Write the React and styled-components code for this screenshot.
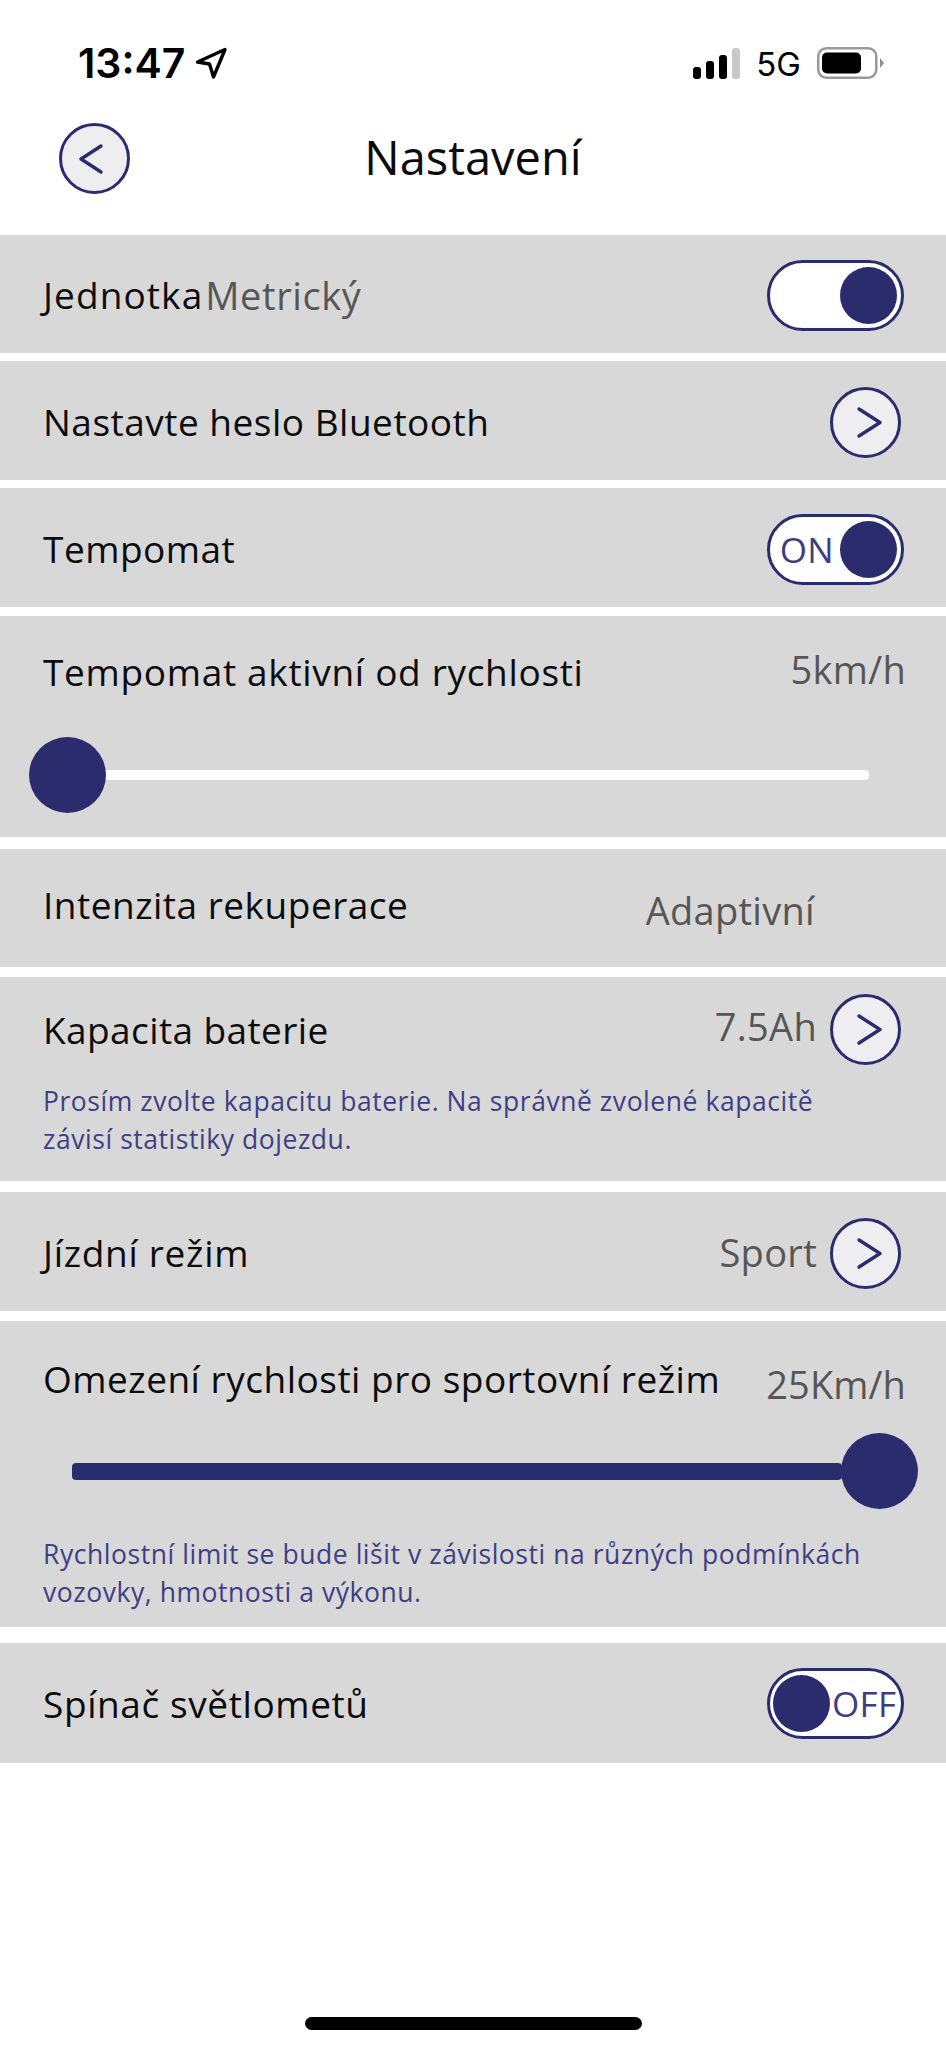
import React from "react";
import styled, { createGlobalStyle } from "styled-components";

const NAVY = "#2b2c6e";

const Global = createGlobalStyle`
  html, body { margin: 0; padding: 0; background: #fff; }
  * { box-sizing: border-box; }
`;

const Page = styled.div`
  width: 946px;
  height: 2048px;
  display: flex;
  flex-direction: column;
  background: #fff;
  overflow: hidden;
  font-family: "Open Sans", "Noto Sans", sans-serif;
`;

const StatusBar = styled.div`
  height: 123px;
  padding: 44px 62px 0 78px;
  display: flex;
  justify-content: space-between;
  align-items: flex-start;
  font-family: Inter, "Liberation Sans", sans-serif;
  color: #000;
`;
const StatusGroup = styled.div`
  display: flex;
  align-items: center;
  gap: ${(p) => p.$gap || 0}px;
  height: 38px;
`;
const Clock = styled.span`
  font-size: 41px;
  font-weight: 600;
  line-height: 38px;
`;
const Network = styled.span`
  font-size: 33px;
  font-weight: 400;
  line-height: 38px;
  transform: translateY(1px);
`;

const NavBar = styled.div`
  height: 112px;
  padding: 0 0 0 59px;
  display: flex;
  align-items: flex-start;
`;
const Title = styled.h1`
  margin: 0;
  flex: 1;
  padding: 3px 130px 0 0;
  text-align: center;
  font-size: 47px;
  line-height: 62px;
  font-weight: 400;
  color: #0b0b0b;
`;

const CircleButton = styled.div`
  width: 71px;
  height: 71px;
  flex: none;
  border-radius: 50%;
  border: 3px solid ${NAVY};
  background: #eeeef0;
  display: flex;
  align-items: center;
  justify-content: center;
`;

const Rows = styled.div`
  display: flex;
  flex-direction: column;
`;
const Row = styled.div`
  height: ${(p) => p.$h}px;
  margin-bottom: ${(p) => p.$gap || 0}px;
  background: #d8d8d8;
  padding: ${(p) => p.$pt || 0}px 42px 0 43px;
  display: flex;
  flex-direction: column;
`;
const Line = styled.div`
  display: flex;
  align-items: center;
  justify-content: space-between;
  height: ${(p) => p.$h || 71}px;
`;
const Label = styled.span`
  font-size: 37px;
  line-height: 50px;
  letter-spacing: ${(p) => p.$ls ?? 0.5}px;
  color: #0c0c0c;
  transform: translateY(${(p) => p.$dy || 0}px);
  white-space: nowrap;
`;
const Value = styled.span`
  font-size: 38px;
  line-height: 50px;
  letter-spacing: ${(p) => p.$ls ?? 0.3}px;
  color: #565656;
  white-space: nowrap;
  transform: translateY(${(p) => p.$dy || 0}px);
  margin-right: ${(p) => p.$mr || 0}px;
  margin-left: ${(p) => p.$ml || 0}px;
`;
const InlineLabel = styled.span`
  display: flex;
`;
const Trailing = styled.div`
  display: flex;
  align-items: center;
  gap: 13px;
  margin-right: 3px;
`;
const Note = styled.p`
  margin: ${(p) => p.$mt || 0}px 0 0;
  font-size: 26.5px;
  line-height: 38px;
  letter-spacing: 0.55px;
  color: #3f3f85;
  white-space: pre-line;
`;

const Toggle = styled.div`
  width: 137px;
  height: 71px;
  flex: none;
  border-radius: 36px;
  border: 3px solid ${NAVY};
  background: #fff;
  display: flex;
  align-items: center;
  justify-content: ${(p) => (p.$on ? "flex-end" : "flex-start")};
  padding: ${(p) => (p.$on ? "0 4px 0 6px" : "0 2px 0 3px")};
  gap: ${(p) => (p.$on ? 6 : 2)}px;
`;
const Knob = styled.div`
  width: 57px;
  height: 57px;
  border-radius: 50%;
  background: ${NAVY};
  flex: none;
`;
const ToggleText = styled.span`
  font-size: 35px;
  line-height: 40px;
  letter-spacing: 0.3px;
  color: #3d3d80;
`;

const SliderWrap = styled.div`
  position: relative;
  height: 76px;
  margin: ${(p) => p.$mt}px 0 0;
  display: flex;
  align-items: center;
`;
const Track = styled.div`
  width: ${(p) => p.$w}px;
  height: ${(p) => p.$th}px;
  margin-left: ${(p) => p.$ml}px;
  border-radius: 4px;
  background: ${(p) => p.$c};
`;
const Thumb = styled.div`
  position: absolute;
  top: 0;
  left: ${(p) => p.$x}px;
  width: 77px;
  height: 76px;
  border-radius: 50%;
  background: ${NAVY};
`;

const Footer = styled.div`
  margin-top: auto;
  padding-bottom: 18px;
  display: flex;
  justify-content: center;
`;
const HomeBar = styled.div`
  width: 337px;
  height: 13px;
  border-radius: 7px;
  background: #000;
`;

const Chevron = ({ dir }) => (
  <svg width="65" height="65" viewBox="0 0 65 65" fill="none">
    <path
      d={dir === "left" ? "M39 20 L19 33 L39 46" : "M26 19 L47 32.5 L26 46"}
      stroke={NAVY}
      strokeWidth="3.4"
      strokeLinecap="round"
      strokeLinejoin="round"
    />
  </svg>
);

const LocationArrow = () => (
  <svg width="34" height="34" viewBox="0 0 34 34" fill="none">
    <path
      d="M31 3.5 L3.5 16 L15.5 18 L19.5 31 Z"
      stroke="#000"
      strokeWidth="3.4"
      strokeLinejoin="round"
    />
  </svg>
);

const Signal = () => (
  <svg width="47" height="31" viewBox="0 0 47 31">
    <rect x="0" y="19" width="8" height="12" rx="3" fill="#000" />
    <rect x="13" y="13" width="8" height="18" rx="3" fill="#000" />
    <rect x="26" y="7" width="8" height="24" rx="3" fill="#000" />
    <rect x="39" y="0" width="8" height="31" rx="3" fill="#c9c9c9" />
  </svg>
);

const Battery = () => (
  <svg width="67" height="32" viewBox="0 0 67 32">
    <rect x="1.25" y="1.25" width="58" height="29.5" rx="8" fill="none" stroke="#999" strokeWidth="2.5" />
    <rect x="5" y="5.5" width="39" height="21" rx="5" fill="#000" />
    <path d="M63 11 L67 16 L63 21 Z" fill="#8e8e8e" />
  </svg>
);

export default function App() {
  return (
    <Page>
      <Global />
      <StatusBar>
        <StatusGroup $gap={9}>
          <Clock>13:47</Clock>
          <LocationArrow />
        </StatusGroup>
        <StatusGroup $gap={16}>
          <Signal />
          <Network>5G</Network>
          <Battery />
        </StatusGroup>
      </StatusBar>

      <NavBar>
        <CircleButton>
          <Chevron dir="left" />
        </CircleButton>
        <Title>Nastavení</Title>
      </NavBar>

      <Rows>
        <Row $h={118} $gap={8} $pt={25}>
          <Line>
            <InlineLabel>
              <Label $ls={1.1} $dy={-1}>Jednotka</Label>
              <Value $dy={-1} $ml={2} $ls={0.6}>Metrický</Value>
            </InlineLabel>
            <Toggle $on>
              <Knob />
            </Toggle>
          </Line>
        </Row>

        <Row $h={119} $gap={8} $pt={26}>
          <Line>
            <Label $dy={-1}>Nastavte heslo Bluetooth</Label>
            <Trailing>
              <CircleButton>
                <Chevron dir="right" />
              </CircleButton>
            </Trailing>
          </Line>
        </Row>

        <Row $h={119} $gap={9} $pt={26}>
          <Line>
            <Label $dy={-1}>Tempomat</Label>
            <Toggle $on>
              <ToggleText>ON</ToggleText>
              <Knob />
            </Toggle>
          </Line>
        </Row>

        <Row $h={221} $gap={12} $pt={22}>
          <Line>
            <Label $dy={-2} $ls={0.68}>Tempomat aktivní od rychlosti</Label>
            <Value $dy={-5} $mr={-2}>5km/h</Value>
          </Line>
          <SliderWrap $mt={28}>
            <Track $w={795} $th={10} $ml={31} $c="#fff" />
            <Thumb $x={-14} />
          </SliderWrap>
        </Row>

        <Row $h={118} $gap={10} $pt={21}>
          <Line>
            <Label $dy={-1}>Intenzita rekuperace</Label>
            <Value $dy={4} $mr={89}>Adaptivní</Value>
          </Line>
        </Row>

        <Row $h={204} $gap={11} $pt={17}>
          <Line>
            <Label $dy={0} $ls={0.4}>Kapacita baterie</Label>
            <Trailing>
              <Value $dy={-4}>7.5Ah</Value>
              <CircleButton>
                <Chevron dir="right" />
              </CircleButton>
            </Trailing>
          </Line>
          <Note $mt={17}>{"Prosím zvolte kapacitu baterie. Na správně zvolené kapacitě\nzávisí statistiky dojezdu."}</Note>
        </Row>

        <Row $h={119} $gap={10} $pt={26}>
          <Line>
            <Label $dy={-1} $ls={0.7}>Jízdní režim</Label>
            <Trailing>
              <Value $dy={-2}>Sport</Value>
              <CircleButton>
                <Chevron dir="right" />
              </CircleButton>
            </Trailing>
          </Line>
        </Row>

        <Row $h={306} $gap={16} $pt={0}>
          <Line $h={102}>
            <Label $dy={7}>Omezení rychlosti pro sportovní režim</Label>
            <Value $dy={12} $mr={-2} $ls={0.1}>25Km/h</Value>
          </Line>
          <SliderWrap $mt={10}>
            <Track $w={770} $th={17} $ml={29} $c={NAVY} />
            <Thumb $x={798} />
          </SliderWrap>
          <Note $mt={26}>{"Rychlostní limit se bude lišit v závislosti na různých podmínkách\nvozovky, hmotnosti a výkonu."}</Note>
        </Row>

        <Row $h={120} $pt={25}>
          <Line>
            <Label $ls={0.6}>Spínač světlometů</Label>
            <Toggle>
              <Knob />
              <ToggleText>OFF</ToggleText>
            </Toggle>
          </Line>
        </Row>
      </Rows>

      <Footer>
        <HomeBar />
      </Footer>
    </Page>
  );
}
